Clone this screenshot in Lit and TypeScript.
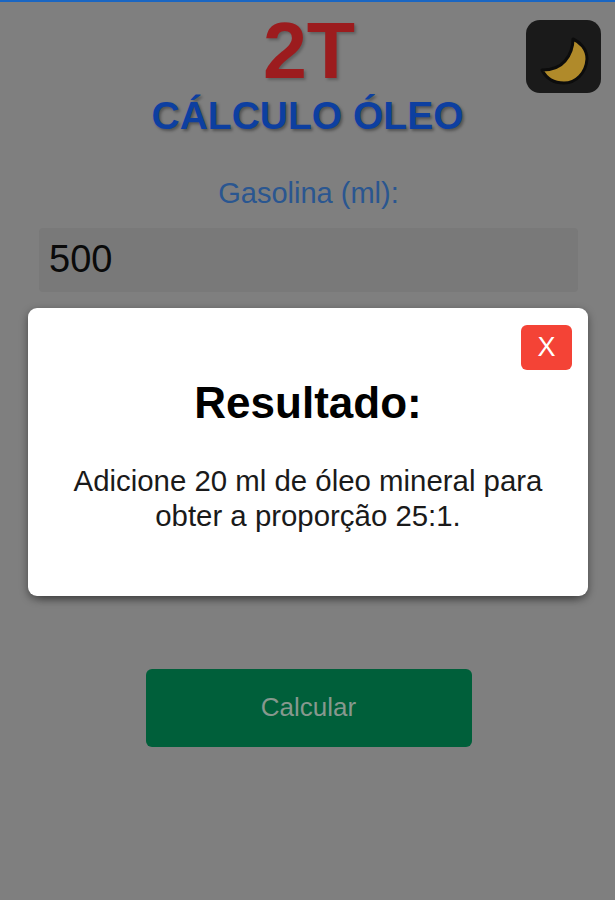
import { css, html, LitElement } from 'lit'
import { customElement } from 'lit/decorators.js'

@customElement('app-root')
export class AppRoot extends LitElement {
  static override styles = css`
    :host {
      display: block;
      position: relative;
      height: 900px;
      overflow: hidden;
      background: #7f7f7f;
      font-family: "Liberation Sans", Arial, sans-serif;
    }

    .topline {
      height: 2px;
      background: #1a66c2;
    }

    .header {
      display: grid;
      grid-template-columns: 1fr auto 1fr;
      padding: 18px 14px 0 0;
    }

    .titles {
      grid-column: 2;
      text-align: center;
      margin-left: 14px;
    }

    .title {
      margin: 0;
      padding-left: 3px;
      font-size: 79px;
      line-height: 62px;
      font-weight: 700;
      color: #9c1c1e;
      text-shadow: 2px 2px 3px rgba(0, 0, 0, 0.25);
    }

    .subtitle {
      margin: 12px 0 0;
      font-size: 39px;
      line-height: 44px;
      font-weight: 700;
      color: #0d3fa0;
      text-shadow: 2px 2px 3px rgba(0, 0, 0, 0.35);
    }

    .theme {
      grid-column: 3;
      justify-self: end;
      width: 75px;
      height: 73px;
      border-radius: 14px;
      background: #1a1a1a;
    }

    .theme svg {
      display: block;
    }

    .form {
      display: flex;
      flex-direction: column;
      align-items: center;
      padding: 0 37px 0 39px;
    }

    .label {
      margin-top: 37px;
      font-size: 29px;
      line-height: 36px;
      color: #2a5690;
    }

    .input {
      align-self: stretch;
      box-sizing: border-box;
      height: 64px;
      margin-top: 17px;
      padding: 0 10px;
      border-radius: 4px;
      background: #797979;
      color: #0a0a0a;
      font-size: 38px;
      line-height: 63px;
    }

    .submit {
      display: flex;
      align-items: center;
      justify-content: center;
      box-sizing: border-box;
      width: 326px;
      height: 78px;
      margin-top: 377px;
      padding-bottom: 2px;
      border-radius: 6px;
      background: #005f3a;
      color: #87988e;
      font-size: 26px;
    }

    /* modal sits over the dimmed page */
    .modal {
      position: absolute;
      left: 28px;
      top: 308px;
      box-sizing: border-box;
      width: 560px;
      height: 288px;
      display: flex;
      flex-direction: column;
      align-items: center;
      border-radius: 9px;
      background: #ffffff;
      color: #000000;
      box-shadow:
        0 3px 9px rgba(0, 0, 0, 0.45),
        0 16px 6px -12px rgba(0, 0, 0, 0.12);
    }

    .close {
      position: absolute;
      top: 17px;
      right: 16px;
      display: flex;
      align-items: center;
      justify-content: center;
      width: 51px;
      height: 45px;
      border-radius: 6px;
      background: #f44336;
      color: #ffffff;
      font-size: 27px;
    }

    .modal h2 {
      margin: 69px 0 0;
      font-size: 44px;
      line-height: 52px;
      font-weight: 700;
    }

    .modal p {
      margin: 34px 0 0;
      width: 500px;
      font-size: 29.4px;
      line-height: 35px;
      text-align: center;
      color: #1a1a1a;
    }
  `

  override render() {
    return html`
      <div class="topline"></div>
      <div class="header">
        <div class="titles">
          <h1 class="title">2T</h1>
          <div class="subtitle">CÁLCULO ÓLEO</div>
        </div>
        <div class="theme">
          <svg width="75" height="73" viewBox="0 0 75 73">
            <path
              d="M47 19 C54 22 61 29 61 39 C60 53 50 63 38 63 C28 63 20 58 16 50 C25 50 34 47 39 41 C45 34 47 27 47 19 Z"
              fill="#b08a2a"
              stroke="#0c0c0c"
              stroke-width="3"
              stroke-linejoin="round"
            />
          </svg>
        </div>
      </div>
      <div class="form">
        <div class="label">Gasolina (ml):</div>
        <div class="input">500</div>
        <div class="submit">Calcular</div>
      </div>
      <div class="modal">
        <div class="close">X</div>
        <h2>Resultado:</h2>
        <p>Adicione 20 ml de óleo mineral para obter a proporção 25:1.</p>
      </div>
    `
  }
}
